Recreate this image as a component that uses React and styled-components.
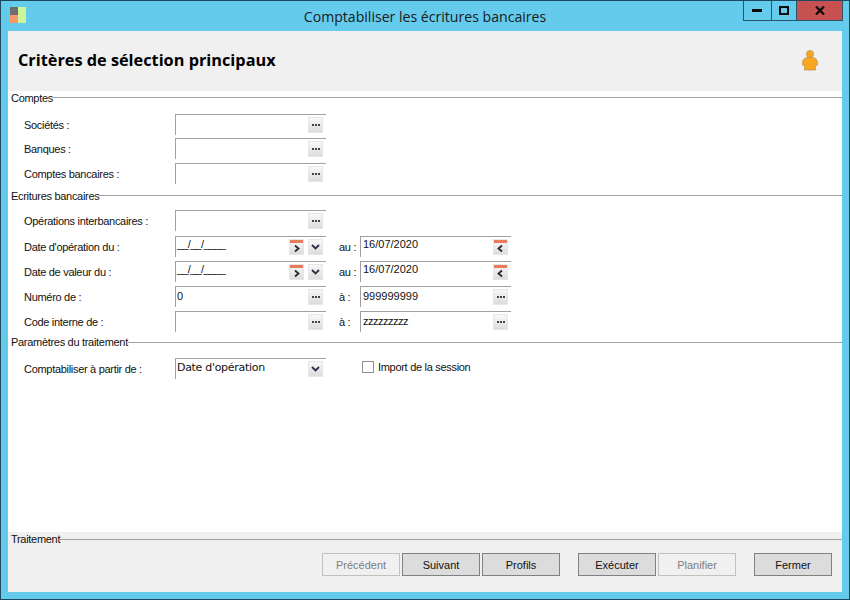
import React from 'react'
import styled, { createGlobalStyle } from 'styled-components'

const Global = createGlobalStyle`
html, body { margin: 0; padding: 0; background: #65cbec; }
* { box-sizing: border-box; }
`
const Window = styled.div`
width: 850px;
height: 600px;
display: flex;
flex-direction: column;
background: #65cbec;
border: 1px solid #1d4a5f;
padding: 0 7px 7px;
font-family: "Liberation Sans", sans-serif;
font-size: 11px;
letter-spacing: -0.3px;
color: #111;
overflow: hidden;
`
const TitleBar = styled.div`
height: 30px;
flex: none;
margin: 0 -7px;
display: grid;
grid-template-columns: 1fr auto 1fr;
align-items: start;
`
const AppIcon = styled.svg`
margin: 6px 0 0 9px;
display: block;
`
const Title = styled.div`
font-family: "Open Sans", sans-serif;
font-size: 14.1px;
letter-spacing: 0;
line-height: 18px;
padding-top: 7px;
color: #1a1a1a;
`
const Controls = styled.div`
justify-self: end;
margin-right: 6px;
display: flex;
height: 21px;
margin-top: -1px;
border: 1px solid #2c5568;
border-top: none;
`
const Control = styled.div`
width: ${p => p.$w}px;
display: flex;
align-items: center;
justify-content: center;
background: ${p => p.$bg || 'transparent'};
border-left: ${p => p.$first ? 'none' : '1px solid #2c5568'};
`
const Client = styled.div`
flex: 1;
display: flex;
flex-direction: column;
background: #fff;
`
const Header = styled.div`
height: 60px;
flex: none;
background: #f0f0f0;
display: flex;
align-items: center;
justify-content: space-between;
padding: 0 24px 2px 10px;
`
const Heading = styled.h1`
margin: 0;
font-family: "Open Sans", sans-serif;
font-size: 16.3px;
font-weight: 700;
letter-spacing: 0;
color: #000;
`
const Body = styled.div`
flex: 1;
`
const Legend = styled.div`
height: 12px;
display: flex;
align-items: center;
padding-left: 3px;
white-space: nowrap;
&::after {
  content: '';
  flex: 1;
  height: 1px;
  background: #a0a0a0;
}
`
const LegendText = styled.span`
line-height: 14px;
margin-top: ${p => (p.$drop || 0) * 2}px;
`
const Rows = styled.div`
padding: ${p => p.$top}px 0 0 16px;
`
const Row = styled.div`
display: flex;
height: ${p => p.$h || 25}px;
`
const Label = styled.div`
width: 151px;
flex: none;
line-height: 22px;
`
const SideLabel = styled.div`
width: 21px;
margin-left: 13px;
flex: none;
line-height: 22px;
`
const Field = styled.div`
width: 151px;
height: 21px;
flex: none;
display: flex;
align-items: flex-start;
gap: 4px;
padding: 2px 3px 0 ${p => p.$pad || 1}px;
border-top: 1px solid #a0a0a0;
border-left: 1px solid #a0a0a0;
`
const Value = styled.span`
flex: 1;
line-height: 14px;
letter-spacing: ${p => p.$spacing || 0}px;
margin-top: ${p => p.$up ? -2 : 0}px;
font-family: ${p => p.$mono ? '"DejaVu Sans", sans-serif' : 'inherit'};
`
const Small = styled.div`
width: 15px;
height: 16px;
flex: none;
display: flex;
align-items: center;
justify-content: center;
background: linear-gradient(#f8f8f8, #dcdcdc);
border: 1px solid #e6e6e6;
`
const Check = styled.div`
width: 12px;
height: 12px;
margin: 3px 4px 0 36px;
flex: none;
background: #fff;
border: 1px solid #8f8f8f;
`
const CheckLabel = styled.div`
line-height: 18px;
`
const Footer = styled.div`
height: 60px;
flex: none;
background: #f0f0f0;
padding-top: 1px;
`
const Actions = styled.div`
display: flex;
justify-content: flex-end;
padding: 8px 10px 0 0;
gap: 2px;
`
const Action = styled.div`
width: 78px;
height: 23px;
display: flex;
align-items: center;
justify-content: center;
letter-spacing: 0;
margin-left: ${p => p.$gap || 0}px;
background: ${p => p.$off ? '#f0f0f0' : '#dcdcdc'};
border: 1px solid ${p => p.$off ? '#c0c0c0' : '#808080'};
color: ${p => p.$off ? '#7d7d7d' : '#111'};
`

const Dots = () => (
  <Small>
    <svg width="8" height="2" viewBox="0 0 8 2">
      <path d="M0 0h2v2H0zM3 0h2v2H3zM6 0h2v2H6z" fill="#444" />
    </svg>
  </Small>
)
const Chevron = () => (
  <Small>
    <svg width="9" height="6" viewBox="0 0 9 6">
      <path d="M1 1l3.500 3.500L8 1" fill="none" stroke="#2a3344" strokeWidth="1.800" />
    </svg>
  </Small>
)
const Calendar = ({ back }) => (
  <Small>
    <svg width="13" height="14" viewBox="0 0 13 14">
      <rect x="0" y="0" width="13" height="3" fill="#ea7a5c" />
      <path d={back ? 'M8 5.500L4.500 8.500 8 11.500' : 'M5 5.500l3.500 3L5 11.500'} fill="none" stroke="#2a2a2a" strokeWidth="1.800" />
    </svg>
  </Small>
)
const Person = () => (
  <svg width="16" height="21" viewBox="0 0 16 21">
    <circle cx="8" cy="4" r="3.600" fill="#f8a71e" stroke="#b98f4e" strokeWidth=".7" />
    <path d="M4.500 7.500h7Q15 8.500 15.500 12v3l-2 .8V20h-11v-4.200l-2-.8v-3Q1 8.500 4.500 7.500z" fill="#f8a71e" stroke="#b98f4e" strokeWidth=".7" />
  </svg>
)

const DATE_BLANK = '__/__/____'

const App = () => (
  <>
    <Global />
    <Window>
      <TitleBar>
        <AppIcon width="17" height="17" viewBox="0 0 17 17">
          <rect x="0" y="0" width="8" height="8" fill="#6e6e6e" />
          <rect x="0" y="8" width="8" height="8" fill="#f79a66" />
          <rect x="8" y="0" width="8" height="16" fill="#cdf59a" />
        </AppIcon>
        <Title>Comptabiliser les écritures bancaires</Title>
        <Controls>
          <Control $w={27} $first>
            <svg width="11" height="4" viewBox="0 0 11 4"><rect width="10" height="3" y="1" fill="#0b0b0b" /></svg>
          </Control>
          <Control $w={25}>
            <svg width="10" height="9" viewBox="0 0 10 9"><rect x="1" y="1" width="8" height="7" fill="none" stroke="#0b0b0b" strokeWidth="2" /></svg>
          </Control>
          <Control $w={46} $bg="#c75050">
            <svg width="10" height="9" viewBox="0 0 10 9"><path d="M1 0.500l8 8M9 0.500l-8 8" stroke="#0b0b0b" strokeWidth="2.200" /></svg>
          </Control>
        </Controls>
      </TitleBar>
      <Client>
        <Header>
          <Heading>Critères de sélection principaux</Heading>
          <Person />
        </Header>
        <Body>
          <Legend><LegendText $drop={1}>Comptes</LegendText></Legend>
          <Rows $top={11}>
            <Row $h={24}><Label>Sociétés :</Label><Field><Value /><Dots /></Field></Row>
            <Row><Label>Banques :</Label><Field><Value /><Dots /></Field></Row>
            <Row $h={26}><Label>Comptes bancaires :</Label><Field><Value /><Dots /></Field></Row>
          </Rows>
          <Legend><LegendText $drop={1}>Ecritures bancaires</LegendText></Legend>
          <Rows $top={9}>
            <Row $h={26}><Label>Opérations interbancaires :</Label><Field><Value /><Dots /></Field></Row>
            <Row>
              <Label>Date d'opération du :</Label>
              <Field><Value $up $spacing={-0.7}>{DATE_BLANK}</Value><Calendar /><Chevron /></Field>
              <SideLabel>au :</SideLabel>
              <Field $pad={2}><Value $up>16/07/2020</Value><Calendar back /></Field>
            </Row>
            <Row>
              <Label>Date de valeur du :</Label>
              <Field><Value $up $spacing={-0.7}>{DATE_BLANK}</Value><Calendar /><Chevron /></Field>
              <SideLabel>au :</SideLabel>
              <Field $pad={2}><Value $up>16/07/2020</Value><Calendar back /></Field>
            </Row>
            <Row>
              <Label>Numéro de :</Label>
              <Field><Value>0</Value><Dots /></Field>
              <SideLabel>à :</SideLabel>
              <Field $pad={2}><Value>999999999</Value><Dots /></Field>
            </Row>
            <Row>
              <Label>Code interne de :</Label>
              <Field><Value /><Dots /></Field>
              <SideLabel>à :</SideLabel>
              <Field $pad={2}><Value $spacing={-0.5}>zzzzzzzzz</Value><Dots /></Field>
            </Row>
          </Rows>
          <Legend><LegendText>Paramètres du traitement</LegendText></Legend>
          <Rows $top={10}>
            <Row>
              <Label>Comptabiliser à partir de :</Label>
              <Field><Value $mono $spacing={-0.3}>Date d'opération</Value><Chevron /></Field>
              <Check />
              <CheckLabel>Import de la session</CheckLabel>
            </Row>
          </Rows>
        </Body>
        <Footer>
          <Legend><LegendText>Traitement</LegendText></Legend>
          <Actions>
            <Action $off>Précédent</Action>
            <Action>Suivant</Action>
            <Action>Profils</Action>
            <Action $gap={16}>Exécuter</Action>
            <Action $off>Planifier</Action>
            <Action $gap={16}>Fermer</Action>
          </Actions>
        </Footer>
      </Client>
    </Window>
  </>
)

export default App
